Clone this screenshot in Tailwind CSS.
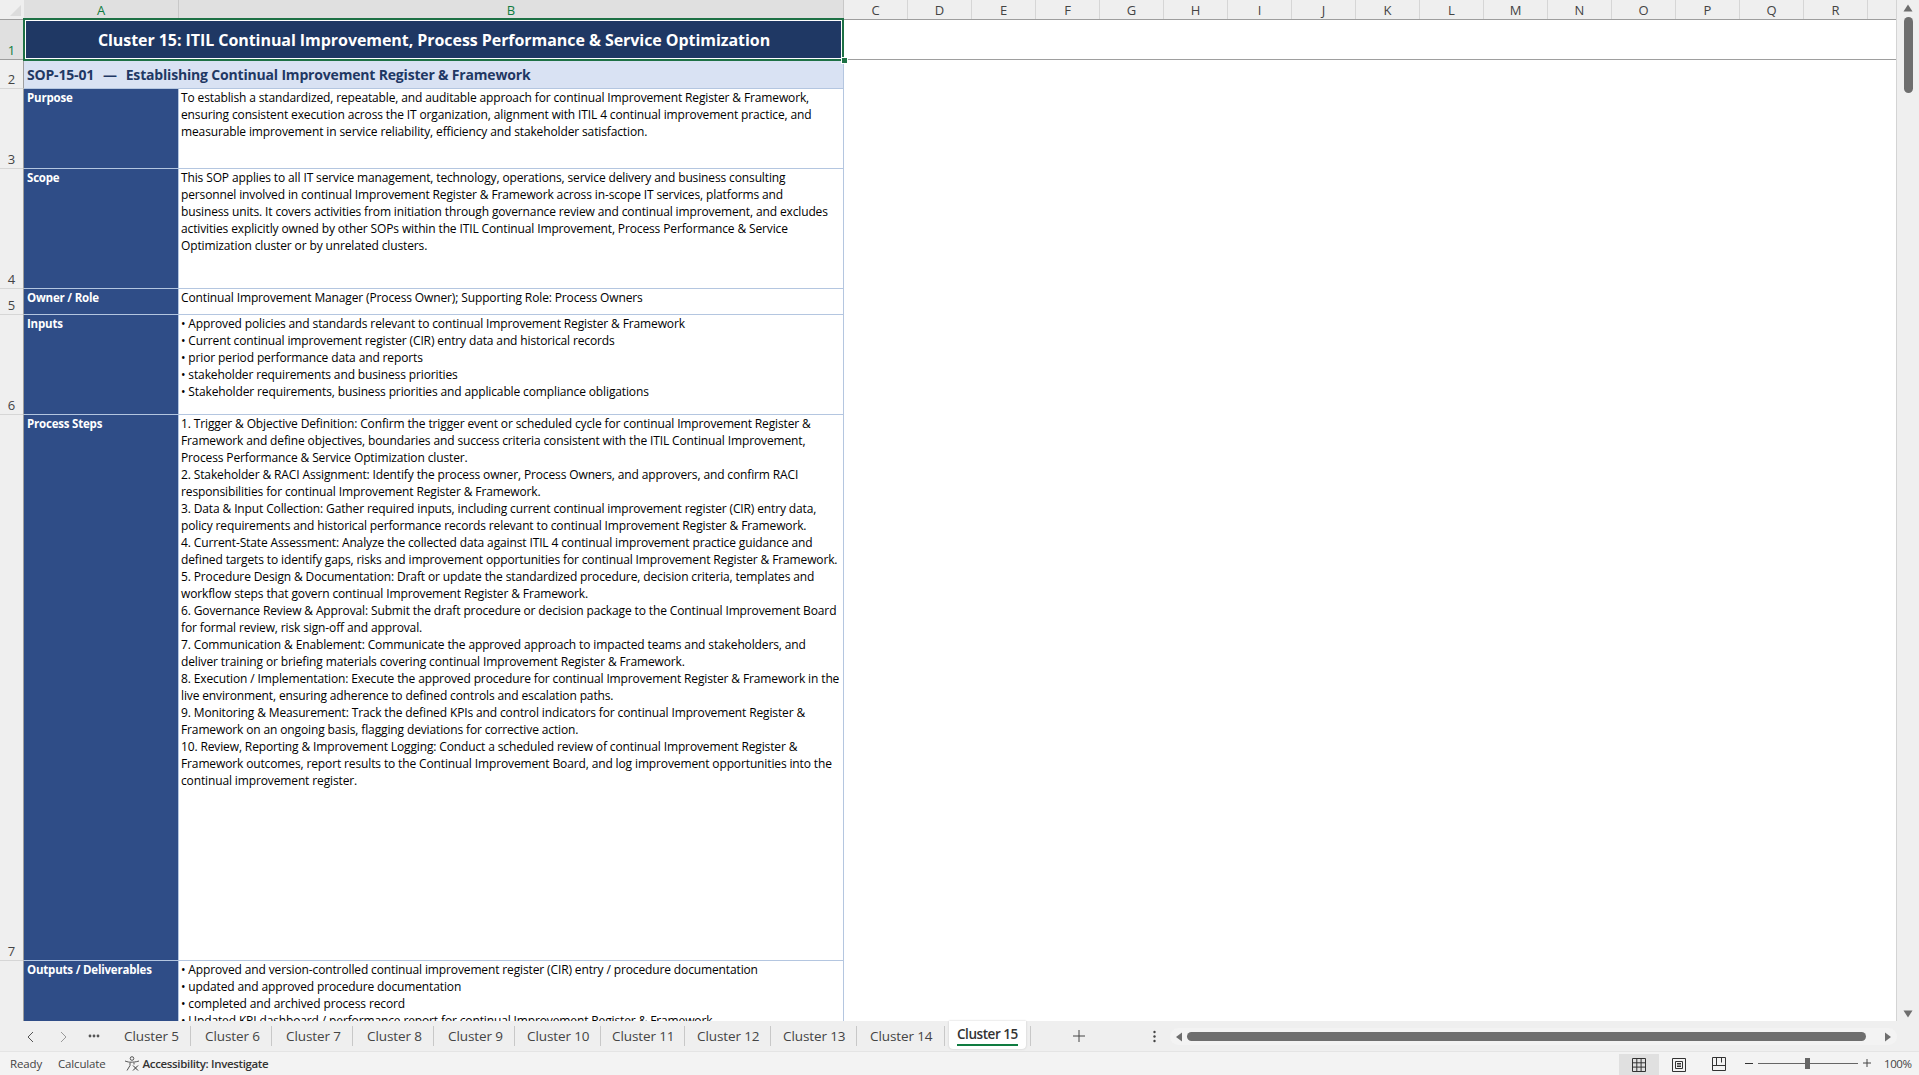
<!DOCTYPE html>
<html><head><meta charset="utf-8"><title>Excel</title>
<script src="https://cdn.jsdelivr.net/npm/@tailwindcss/browser@4"></script></head>
<body class="m-0 overflow-hidden bg-white">
<div class="w-[1919px] h-[1075px] flex flex-col overflow-hidden font-['Open_Sans',sans-serif] text-[#000]">
  <div class="h-[1021px] flex relative">
    <div class="w-[1897px] h-[1021px] overflow-hidden relative border-r border-[#d4d4d4]">
      <div class="grid grid-cols-[24px_155px_665px_1fr] grid-rows-[20px_40px_29px_80px_120px_26px_100px_546px_60px] h-[1021px] text-[12px] leading-[17px] tracking-[-0.13px]">
        <!-- column headers -->
        <div class="bg-[#efefef] border-b border-[#9e9e9e] relative"><svg class="absolute left-[9px] top-[4px]" width="13" height="13" viewBox="0 0 13 13"><path d="M12 1V12H1Z" fill="#dcdcdc"/></svg></div>
        <div class="bg-[#e0e0e0] border-b border-[#9e9e9e] border-r border-r-[#c8c8c8] text-[#107c41] text-[13px] tracking-normal flex items-center justify-center leading-none pt-[2px]">A</div>
        <div class="bg-[#e0e0e0] border-b border-[#9e9e9e] border-r border-r-[#c8c8c8] text-[#107c41] text-[13px] tracking-normal flex items-center justify-center leading-none pt-[2px]">B</div>
        <div class="bg-[#efefef] border-b border-[#9e9e9e] flex text-[13px] tracking-normal text-[#444] leading-none">
          <div class="w-[64px] shrink-0 flex items-center justify-center border-r border-[#d6d6d6] pt-[2px]">C</div>
          <div class="w-[64px] shrink-0 flex items-center justify-center border-r border-[#d6d6d6] pt-[2px]">D</div>
          <div class="w-[64px] shrink-0 flex items-center justify-center border-r border-[#d6d6d6] pt-[2px]">E</div>
          <div class="w-[64px] shrink-0 flex items-center justify-center border-r border-[#d6d6d6] pt-[2px]">F</div>
          <div class="w-[64px] shrink-0 flex items-center justify-center border-r border-[#d6d6d6] pt-[2px]">G</div>
          <div class="w-[64px] shrink-0 flex items-center justify-center border-r border-[#d6d6d6] pt-[2px]">H</div>
          <div class="w-[64px] shrink-0 flex items-center justify-center border-r border-[#d6d6d6] pt-[2px]">I</div>
          <div class="w-[64px] shrink-0 flex items-center justify-center border-r border-[#d6d6d6] pt-[2px]">J</div>
          <div class="w-[64px] shrink-0 flex items-center justify-center border-r border-[#d6d6d6] pt-[2px]">K</div>
          <div class="w-[64px] shrink-0 flex items-center justify-center border-r border-[#d6d6d6] pt-[2px]">L</div>
          <div class="w-[64px] shrink-0 flex items-center justify-center border-r border-[#d6d6d6] pt-[2px]">M</div>
          <div class="w-[64px] shrink-0 flex items-center justify-center border-r border-[#d6d6d6] pt-[2px]">N</div>
          <div class="w-[64px] shrink-0 flex items-center justify-center border-r border-[#d6d6d6] pt-[2px]">O</div>
          <div class="w-[64px] shrink-0 flex items-center justify-center border-r border-[#d6d6d6] pt-[2px]">P</div>
          <div class="w-[64px] shrink-0 flex items-center justify-center border-r border-[#d6d6d6] pt-[2px]">Q</div>
          <div class="w-[64px] shrink-0 flex items-center justify-center border-r border-[#d6d6d6] pt-[2px]">R</div>
          <div class="flex-1"></div>
        </div>
        <!-- row 1 -->
        <div class="bg-[#e0e0e0] border-b border-[#9e9e9e] border-r border-r-[#9e9e9e] text-[#107c41] text-[13px] tracking-normal flex items-end justify-center leading-none pb-[2px]">1</div>
        <div class="col-span-2 bg-[#1f3864] text-white font-bold text-[16px] tracking-[-0.06px] flex items-center justify-center">Cluster 15: ITIL Continual Improvement, Process Performance &amp; Service Optimization</div>
        <div class="border-b border-[#9e9e9e]"></div>
        <!-- row 2 -->
        <div class="bg-[#efefef] text-[#444] text-[13px] tracking-normal flex items-end justify-center leading-none pb-[2px] border-b border-[#d6d6d6] border-r border-r-[#9e9e9e]">2</div>
        <div class="col-span-2 bg-[#d9e2f3] text-[#1f3864] font-bold text-[14px] tracking-[-0.18px] flex items-center pl-[3px] border-b border-r border-[#b4c6e0] whitespace-pre"><div>SOP-15-01  <span class="mx-[2px]">—</span>  Establishing Continual Improvement Register &amp; Framework</div></div>
        <div></div>
        <!-- row 3 -->
        <div class="bg-[#efefef] text-[#444] text-[13px] tracking-normal flex items-end justify-center leading-none pb-[2px] border-b border-[#d6d6d6] border-r border-r-[#9e9e9e]">3</div>
        <div class="bg-[#2f4d87] text-white font-bold text-[11.5px] tracking-[-0.2px] pl-[3px] border-b border-r border-[#b4c6e0]">Purpose</div>
        <div class="pl-[2px] border-b border-r border-[#b4c6e0] whitespace-nowrap overflow-hidden">To establish a standardized, repeatable, and auditable approach for continual Improvement Register &amp; Framework,<br>ensuring consistent execution across the IT organization, alignment with ITIL 4 continual improvement practice, and<br>measurable improvement in service reliability, efficiency and stakeholder satisfaction.</div>
        <div></div>
        <!-- row 4 -->
        <div class="bg-[#efefef] text-[#444] text-[13px] tracking-normal flex items-end justify-center leading-none pb-[2px] border-b border-[#d6d6d6] border-r border-r-[#9e9e9e]">4</div>
        <div class="bg-[#2f4d87] text-white font-bold text-[11.5px] tracking-[-0.2px] pl-[3px] border-b border-r border-[#b4c6e0]">Scope</div>
        <div class="pl-[2px] border-b border-r border-[#b4c6e0] whitespace-nowrap overflow-hidden">This SOP applies to all IT service management, technology, operations, service delivery and business consulting<br>personnel involved in continual Improvement Register &amp; Framework across in-scope IT services, platforms and<br>business units. It covers activities from initiation through governance review and continual improvement, and excludes<br>activities explicitly owned by other SOPs within the ITIL Continual Improvement, Process Performance &amp; Service<br>Optimization cluster or by unrelated clusters.</div>
        <div></div>
        <!-- row 5 -->
        <div class="bg-[#efefef] text-[#444] text-[13px] tracking-normal flex items-end justify-center leading-none pb-[2px] border-b border-[#d6d6d6] border-r border-r-[#9e9e9e]">5</div>
        <div class="bg-[#2f4d87] text-white font-bold text-[11.5px] tracking-[-0.2px] pl-[3px] border-b border-r border-[#b4c6e0]">Owner / Role</div>
        <div class="pl-[2px] border-b border-r border-[#b4c6e0] whitespace-nowrap overflow-hidden">Continual Improvement Manager (Process Owner); Supporting Role: Process Owners</div>
        <div></div>
        <!-- row 6 -->
        <div class="bg-[#efefef] text-[#444] text-[13px] tracking-normal flex items-end justify-center leading-none pb-[2px] border-b border-[#d6d6d6] border-r border-r-[#9e9e9e]">6</div>
        <div class="bg-[#2f4d87] text-white font-bold text-[11.5px] tracking-[-0.2px] pl-[3px] border-b border-r border-[#b4c6e0]">Inputs</div>
        <div class="pl-[2px] border-b border-r border-[#b4c6e0] whitespace-nowrap overflow-hidden">• Approved policies and standards relevant to continual Improvement Register &amp; Framework<br>• Current continual improvement register (CIR) entry data and historical records<br>• prior period performance data and reports<br>• stakeholder requirements and business priorities<br>• Stakeholder requirements, business priorities and applicable compliance obligations</div>
        <div></div>
        <!-- row 7 -->
        <div class="bg-[#efefef] text-[#444] text-[13px] tracking-normal flex items-end justify-center leading-none pb-[2px] border-b border-[#d6d6d6] border-r border-r-[#9e9e9e]">7</div>
        <div class="bg-[#2f4d87] text-white font-bold text-[11.5px] tracking-[-0.2px] pl-[3px] border-b border-r border-[#b4c6e0]">Process Steps</div>
        <div class="pl-[2px] border-b border-r border-[#b4c6e0] whitespace-nowrap overflow-hidden">1. Trigger &amp; Objective Definition: Confirm the trigger event or scheduled cycle for continual Improvement Register &amp;<br>Framework and define objectives, boundaries and success criteria consistent with the ITIL Continual Improvement,<br>Process Performance &amp; Service Optimization cluster.<br>2. Stakeholder &amp; RACI Assignment: Identify the process owner, Process Owners, and approvers, and confirm RACI<br>responsibilities for continual Improvement Register &amp; Framework.<br>3. Data &amp; Input Collection: Gather required inputs, including current continual improvement register (CIR) entry data,<br>policy requirements and historical performance records relevant to continual Improvement Register &amp; Framework.<br>4. Current-State Assessment: Analyze the collected data against ITIL 4 continual improvement practice guidance and<br>defined targets to identify gaps, risks and improvement opportunities for continual Improvement Register &amp; Framework.<br>5. Procedure Design &amp; Documentation: Draft or update the standardized procedure, decision criteria, templates and<br>workflow steps that govern continual Improvement Register &amp; Framework.<br>6. Governance Review &amp; Approval: Submit the draft procedure or decision package to the Continual Improvement Board<br>for formal review, risk sign-off and approval.<br>7. Communication &amp; Enablement: Communicate the approved approach to impacted teams and stakeholders, and<br>deliver training or briefing materials covering continual Improvement Register &amp; Framework.<br>8. Execution / Implementation: Execute the approved procedure for continual Improvement Register &amp; Framework in the<br>live environment, ensuring adherence to defined controls and escalation paths.<br>9. Monitoring &amp; Measurement: Track the defined KPIs and control indicators for continual Improvement Register &amp;<br>Framework on an ongoing basis, flagging deviations for corrective action.<br>10. Review, Reporting &amp; Improvement Logging: Conduct a scheduled review of continual Improvement Register &amp;<br>Framework outcomes, report results to the Continual Improvement Board, and log improvement opportunities into the<br>continual improvement register.</div>
        <div></div>
        <!-- row 8 -->
        <div class="bg-[#efefef] border-r border-[#9e9e9e]"></div>
        <div class="bg-[#2f4d87] text-white font-bold text-[11.5px] tracking-[-0.2px] pl-[3px] border-r border-[#b4c6e0]">Outputs / Deliverables</div>
        <div class="pl-[2px] border-r border-[#b4c6e0] whitespace-nowrap overflow-hidden">• Approved and version-controlled continual improvement register (CIR) entry / procedure documentation<br>• updated and approved procedure documentation<br>• completed and archived process record<br>• Updated KPI dashboard / performance report for continual Improvement Register &amp; Framework</div>
        <div></div>
      </div>
      <!-- selection -->
      <div class="absolute left-[23px] top-[18px] w-[821px] h-[43px] border-2 border-[#1e7145] shadow-[inset_0_0_0_1px_#fff] pointer-events-none"></div>
      <div class="absolute left-[841px] top-[57px] w-[5px] h-[5px] bg-[#1e7145] border border-white box-content"></div>
    </div>
    <!-- vertical scrollbar -->
    <div class="w-[22px] bg-[#efefef] relative">
      <svg class="absolute left-[6px] top-[4px]" width="10" height="8" viewBox="0 0 10 8"><path d="M5 0.5 9.5 7.5H0.5Z" fill="#6e6e6e"/></svg>
      <div class="absolute left-[7px] top-[17px] w-[9px] h-[76px] rounded-full bg-[#6e6e6e]"></div>
      <svg class="absolute left-[6px] top-[1010px]" width="10" height="8" viewBox="0 0 10 8"><path d="M5 7.5 9.5 0.5H0.5Z" fill="#6e6e6e"/></svg>
    </div>
  </div>
  <!-- tab bar -->
  <div class="h-[31px] bg-[#efefef] flex items-center relative border-b border-[#e4e4e4] text-[13.5px] text-[#444] tracking-[-0.1px]">
    <div class="w-[124px] shrink-0 relative h-full">
      <svg class="absolute left-[26px] top-[10px]" width="10" height="12" viewBox="0 0 10 12" fill="none" stroke="#555" stroke-width="1"><path d="M7 1 2 6l5 5"/></svg>
      <svg class="absolute left-[58px] top-[10px]" width="10" height="12" viewBox="0 0 10 12" fill="none" stroke="#999" stroke-width="1"><path d="M3 1l5 5-5 5"/></svg>
      <svg class="absolute left-[88px] top-[13px]" width="12" height="4" viewBox="0 0 12 4" fill="#555"><circle cx="2" cy="2" r="1.4"/><circle cx="6" cy="2" r="1.4"/><circle cx="10" cy="2" r="1.4"/></svg>
    </div>
    <div class="w-[67px] h-[20px] shrink-0 border-r border-[#c8c8c8] leading-[21px] whitespace-nowrap">Cluster 5</div>
    <div class="w-[81px] h-[20px] shrink-0 border-r border-[#c8c8c8] pl-[14px] leading-[21px] whitespace-nowrap">Cluster 6</div>
    <div class="w-[81px] h-[20px] shrink-0 border-r border-[#c8c8c8] pl-[14px] leading-[21px] whitespace-nowrap">Cluster 7</div>
    <div class="w-[81px] h-[20px] shrink-0 border-r border-[#c8c8c8] pl-[14px] leading-[21px] whitespace-nowrap">Cluster 8</div>
    <div class="w-[81px] h-[20px] shrink-0 border-r border-[#c8c8c8] pl-[14px] leading-[21px] whitespace-nowrap">Cluster 9</div>
    <div class="w-[86px] h-[20px] shrink-0 border-r border-[#c8c8c8] pl-[12px] leading-[21px] whitespace-nowrap">Cluster 10</div>
    <div class="w-[84px] h-[20px] shrink-0 border-r border-[#c8c8c8] pl-[11px] leading-[21px] whitespace-nowrap">Cluster 11</div>
    <div class="w-[86px] h-[20px] shrink-0 border-r border-[#c8c8c8] pl-[12px] leading-[21px] whitespace-nowrap">Cluster 12</div>
    <div class="w-[86px] h-[20px] shrink-0 border-r border-[#c8c8c8] pl-[12px] leading-[21px] whitespace-nowrap">Cluster 13</div>
    <div class="w-[88px] h-[20px] shrink-0 border-r border-[#c8c8c8] pl-[13px] leading-[21px] whitespace-nowrap">Cluster 14</div>
    <div class="ml-[4px] w-[77px] h-[28px] shrink-0 self-start bg-white rounded-b-[4px] shadow-[0_0_2px_#c0c0c0] relative font-semibold text-[#333] tracking-[-0.45px]">
      <div class="absolute left-[8px] top-[3px] leading-[20px] whitespace-nowrap">Cluster 15</div>
      <div class="absolute left-[8px] w-[61px] top-[23px] h-[2px] bg-[#107c41]"></div>
    </div>
    <div class="ml-[4px] w-px h-[20px] bg-[#c8c8c8] shrink-0"></div>
    <svg class="ml-[42px] shrink-0" width="12" height="12" viewBox="0 0 12 12" stroke="#444" stroke-width="1"><path d="M6 0v12M0 6h12"/></svg>
    <svg class="ml-[68px] shrink-0" width="3" height="13" viewBox="0 0 3 13" fill="#444"><circle cx="1.5" cy="2" r="1.2"/><circle cx="1.5" cy="6.5" r="1.2"/><circle cx="1.5" cy="11" r="1.2"/></svg>
    <div class="absolute left-[1170px] top-[7px] w-[727px] h-[17px] rounded-full bg-[#f3f3f3]">
      <svg class="absolute left-[5px] top-[4px]" width="8" height="10" viewBox="0 0 8 10"><path d="M1 5 7 .5v9Z" fill="#6e6e6e"/></svg>
      <div class="absolute left-[17px] top-[4px] w-[679px] h-[9px] rounded-full bg-[#6e6e6e]"></div>
      <svg class="absolute left-[714px] top-[4px]" width="8" height="10" viewBox="0 0 8 10"><path d="M7 5 1 .5v9Z" fill="#6e6e6e"/></svg>
    </div>
  </div>
  <!-- status bar -->
  <div class="h-[23px] bg-[#f3f3f3] flex items-center relative text-[11.5px] text-[#444] tracking-[-0.15px]">
    <div class="ml-[10px]">Ready</div>
    <div class="ml-[16px]">Calculate</div>
    <svg class="ml-[18px]" width="16" height="15" viewBox="0 0 16 15" fill="none" stroke="#555" stroke-width="1"><circle cx="8" cy="2.500" r="1.800"/><path d="M1 5c3 1 4 1.200 6 1.200S12 6 15 5M6 6.500v3l-3 5M10 6.500v2"/><path d="M9 9.500l5 5M14 9.500l-5 5" stroke="#333"/></svg>
    <div class="ml-[3px] font-semibold text-[#333] tracking-[-0.35px]">Accessibility: Investigate</div>
    <div class="absolute left-[1619px] top-[2px] w-[40px] h-[21px] bg-[#e0e0e0]"></div>
    <svg class="absolute left-[1632px] top-[6px]" width="14" height="14" viewBox="0 0 14 14" fill="none" stroke="#333" stroke-width="1"><path d="M.5.500h13v13H.5zM.5 4.800h13M.5 9.100h13M4.800.500v13M9.100.500v13"/></svg>
    <svg class="absolute left-[1672px] top-[6px]" width="14" height="14" viewBox="0 0 14 14" fill="none" stroke="#333" stroke-width="1"><path d="M.5.500h13v13H.5zM3.500 3.500h7v7h-7zM5 5.500h4M5 7h4M5 8.500h4"/></svg>
    <svg class="absolute left-[1712px] top-[5px]" width="14" height="14" viewBox="0 0 14 14" fill="none" stroke="#333" stroke-width="1"><path d="M.5.500h13v13H.5zM.5 8.500h13M4.500.500v8M9.500.500v5"/></svg>
    <div class="absolute left-[1745px] top-[11px] w-[8px] h-px bg-[#333]"></div>
    <div class="absolute left-[1758px] top-[11px] w-[100px] h-px bg-[#666]"></div>
    <div class="absolute left-[1805px] top-[6px] w-[5px] h-[11px] bg-[#666]"></div>
    <svg class="absolute left-[1863px] top-[7px]" width="8" height="8" viewBox="0 0 8 8" stroke="#444" stroke-width="1"><path d="M4 0v8M0 4h8"/></svg>
    <div class="absolute left-[1884px] top-[3px] tracking-[-0.4px]">100%</div>
  </div>
</div>
</body></html>
